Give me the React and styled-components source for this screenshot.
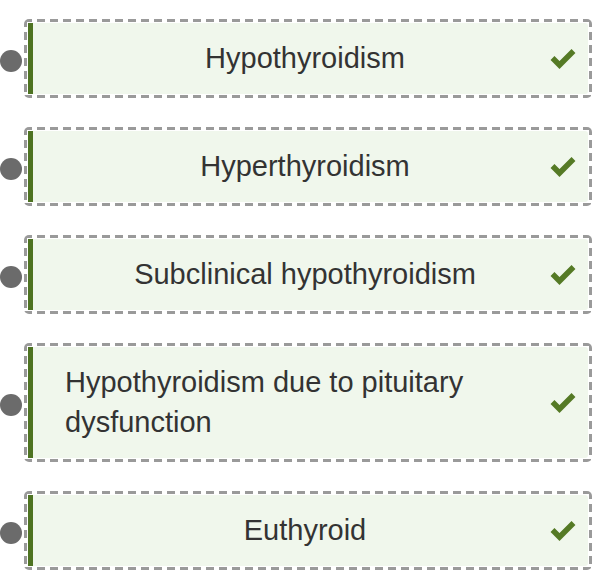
import React from "react";
import styled, { createGlobalStyle } from "styled-components";

const GlobalStyle = createGlobalStyle`
  html, body {
    margin: 0;
    padding: 0;
    background: #ffffff;
  }
  body {
    font-family: "Liberation Sans", Arial, Helvetica, sans-serif;
  }
`;

const List = styled.div`
  display: flex;
  flex-direction: column;
  gap: 29px;
  padding: 19px 10px 0 0;
  width: 602px;
  box-sizing: border-box;
`;

const Row = styled.div`
  position: relative;
  padding-left: 24px;
`;

const Handle = styled.span`
  position: absolute;
  left: 0;
  top: calc(50% - 9px);
  width: 22px;
  height: 22px;
  border-radius: 50%;
  background: #6b6b6b;
`;

const dashH = "repeating-linear-gradient(90deg, #9a9a9a 0 8px, transparent 8px 13px)";
const dashV = "repeating-linear-gradient(180deg, #9a9a9a 0 8px, transparent 8px 13px)";

const Frame = styled.div`
  padding: 4px;
  border-radius: 5px;
  background:
    ${dashH} left top / 100% 3px no-repeat,
    ${dashH} left bottom / 100% 3px no-repeat,
    ${dashV} left top / 3px 100% no-repeat,
    ${dashV} right top / 3px 100% no-repeat;
`;

const Card = styled.div`
  display: flex;
  align-items: center;
  background: #f0f7ec;
  border-left: 5px solid #4e7322;
  border-radius: 0 3px 3px 0;
  padding: 15px 12px 16px 32px;
`;

const Label = styled.div`
  flex: 1;
  display: flex;
  justify-content: center;
  min-width: 0;
`;

const Text = styled.span`
  font-size: 29px;
  line-height: 40px;
  color: #333333;
  text-align: left;
`;

const Check = styled.svg`
  display: block;
  margin-left: 5px;
  width: 26px;
  height: 22px;
  flex: none;
`;

const items = [
  "Hypothyroidism",
  "Hyperthyroidism",
  "Subclinical hypothyroidism",
  "Hypothyroidism due to pituitary dysfunction",
  "Euthyroid",
];

export default function App() {
  return (
    <>
      <GlobalStyle />
      <List>
        {items.map((item) => (
          <Row key={item}>
            <Handle />
            <Frame>
              <Card>
                <Label>
                  <Text>{item}</Text>
                </Label>
                <Check viewBox="0 0 26 22">
                  <polyline
                    points="2.5,11 9.5,18 23.5,4"
                    fill="none"
                    stroke="#557a25"
                    strokeWidth="5.5"
                    strokeLinecap="butt"
                    strokeLinejoin="miter"
                  />
                </Check>
              </Card>
            </Frame>
          </Row>
        ))}
      </List>
    </>
  );
}
